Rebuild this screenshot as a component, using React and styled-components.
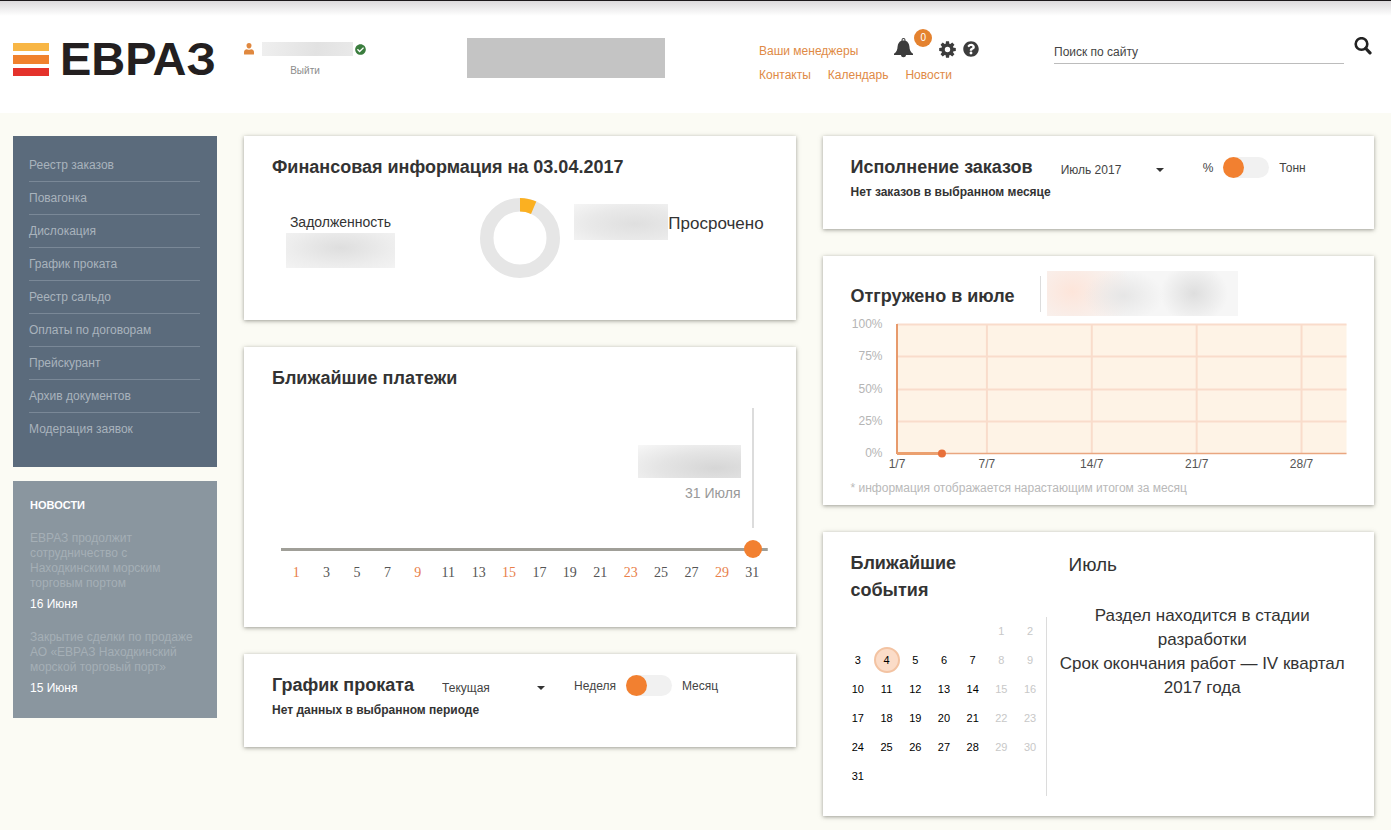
import React, { useState } from "react";
import styled, { createGlobalStyle } from "styled-components";
import { FaQuestionCircle, FaCheckCircle } from "react-icons/fa";

const sans = `"Liberation Sans", Arial, sans-serif`;
const serif = `"Liberation Serif", "Times New Roman", serif`;

const c = {
  ink: "#333333",
  orange: "#f28030",
  link: "#e08a45",
  page: "#fbfbf4",
  nav: "#5b6b7c",
  news: "#8a969f",
};

const GlobalStyle = createGlobalStyle`
  *, *::before, *::after { box-sizing: border-box; }
  body {
    margin: 0;
    min-height: 100vh;
    background: ${c.page};
    color: ${c.ink};
    font-family: ${sans};
    font-size: 12px;
  }
  input, select, button { font-family: inherit; }
  h1, h2, h3, p, ul { margin: 0; padding: 0; }
`;

const Header = styled.header`
  display: grid;
  grid-template-columns: 231px 223fr 292fr 295fr 320fr;
  align-items: start;
  min-height: 113px;
  padding: 36px 17px 0 13px;
  border-top: 1px solid #1c181b;
  background: linear-gradient(#dcdadc, #ffffff 15px);
`;

const Logo = styled.a`
  display: flex;
  align-items: center;
  gap: 11px;
  height: 44px;
  color: #231f20;
  font-size: 47px;
  font-weight: bold;
  line-height: 44px;
  text-decoration: none;
`;

const LogoBars = styled.svg`
  display: block;
  flex: none;
  width: 36px;
  height: 33px;
`;

const User = styled.div`
  display: flex;
  flex-direction: column;
  align-items: center;
  gap: 6px;
  width: 122px;
  padding-top: 5px;
`;

const UserName = styled.div`
  display: flex;
  align-items: center;
  gap: 2px;
  width: 100%;
  color: #e0883f;
`;

const Redacted = styled.span`
  display: block;
  flex: none;
  width: ${(p) => p.$w}px;
  height: ${(p) => p.$h}px;
  background: ${(p) => p.$fill};
`;

const NameRedacted = styled(Redacted)`
  margin-left: 6px;
`;

const Logout = styled.a`
  color: #8c8c8c;
  font-size: 10px;
  line-height: 18px;
  text-decoration: none;
`;

const Company = styled.div`
  width: 198px;
  height: 40px;
  margin-top: 1px;
  background: #c4c4c4;
`;

const Links = styled.nav`
  display: flex;
  flex-direction: column;
  padding-top: 2px;
`;

const LinkRow = styled.div`
  display: flex;
  align-items: center;
  gap: 17px;
  height: 24px;
`;

const HeaderLink = styled.a`
  color: ${c.link};
  font-size: 12px;
  line-height: 16px;
  text-decoration: none;
`;

const Tools = styled.div`
  display: flex;
  align-items: center;
  gap: 7px;
  margin: 0 0 4px 19px;
`;

const IconButton = styled.button`
  position: relative;
  display: flex;
  padding: 0;
  border: 0;
  background: none;
  color: #3c3c3c;
`;

const BellButton = styled(IconButton)`
  margin: 0 19px 2px 0;
`;

const Badge = styled.span`
  position: absolute;
  left: 20px;
  top: -9px;
  width: 18px;
  height: 18px;
  border-radius: 50%;
  background: #e4822f;
  color: #ffffff;
  font-size: 10px;
  line-height: 18px;
  text-align: center;
`;

const Search = styled.form`
  display: flex;
  align-items: flex-start;
  gap: 10px;
  padding-right: 2px;
`;

const SearchInput = styled.input`
  flex: 1;
  min-width: 0;
  height: 27px;
  padding: 4px 0 0;
  border: 0;
  border-bottom: 1px solid #bcbcbc;
  background: none;
  color: ${c.ink};
  font-size: 12px;
  outline: none;
  &::placeholder { color: #444444; opacity: 1; }
`;

const Main = styled.main`
  display: grid;
  grid-template-columns: 204px 1fr 1fr;
  gap: 27px;
  align-items: start;
  padding: 23px 17px 14px 13px;
`;

const Sidebar = styled.aside`
  display: flex;
  flex-direction: column;
  gap: 14px;
`;

const NavBox = styled.nav`
  padding: 13px 17px 21px 16px;
  background: ${c.nav};
`;

const NavList = styled.ul`
  list-style: none;
`;

const NavItem = styled.li`
  border-bottom: 1px solid #7a8897;
  &:last-child { border-bottom-color: transparent; }
`;

const NavLink = styled.a`
  display: block;
  color: #a9b3bc;
  font-size: 12px;
  line-height: 32px;
  text-decoration: none;
`;

const NewsBox = styled.section`
  display: flex;
  flex-direction: column;
  gap: 18px;
  padding: 16px 17px 22px;
  background: ${c.news};
`;

const NewsTitle = styled.h2`
  color: #ffffff;
  font-size: 11px;
  line-height: 16px;
  text-transform: uppercase;
`;

const NewsItem = styled.article`
  display: flex;
  flex-direction: column;
  gap: 6px;
`;

const NewsText = styled.a`
  color: #a5afb6;
  font-size: 12px;
  line-height: 15px;
  text-decoration: none;
`;

const NewsDate = styled.time`
  color: #ffffff;
  font-size: 12px;
  line-height: 15px;
`;

const Column = styled.div`
  display: flex;
  flex-direction: column;
  gap: 27px;
  min-width: 0;
`;

const Card = styled.section`
  padding: ${(p) => p.$top || 18}px 28px ${(p) => p.$bottom || 26}px;
  background: #ffffff;
  box-shadow: 0 1px 4px rgba(60, 60, 50, 0.5);
`;

const Title = styled.h2`
  color: ${c.ink};
  font-size: 18px;
  line-height: 27px;
`;

const Note = styled.p`
  font-size: 12px;
  font-weight: bold;
  line-height: 22px;
`;

const Finance = styled.div`
  display: grid;
  grid-template-columns: 194fr 94fr 193fr;
  padding: 17px 0 0 14px;
`;

const Debt = styled.div`
  display: flex;
  flex-direction: column;
  align-items: center;
  gap: 3px;
  width: 109px;
  padding-top: 16px;
  font-size: 14px;
  line-height: 16px;
`;

const Donut = styled.svg`
  display: block;
  width: 80px;
  height: 80px;
`;

const Overdue = styled.div`
  display: flex;
  align-items: flex-end;
  height: 36px;
  margin-top: 6px;
  font-size: 17px;
  line-height: 32px;
`;

const Timeline = styled.div`
  padding: 16px 0 0 9px;
`;

const Callout = styled.div`
  display: flex;
  flex-direction: column;
  align-items: flex-end;
  gap: 7px;
  height: 120px;
  margin-right: 14px;
  padding: 37px 11px 0 0;
  border-right: 2px solid #dcdcdc;
  color: #999999;
  font-size: 14px;
  line-height: 16px;
`;

const Track = styled.label`
  display: flex;
  margin-top: 12px;
  padding: 0 6px;
  background: linear-gradient(#a09f98, #a09f98) center / 100% 3px no-repeat;
`;

const Range = styled.input`
  appearance: none;
  width: 100%;
  height: 18px;
  margin: 0;
  background: none;
  &::-webkit-slider-thumb {
    appearance: none;
    width: 18px;
    height: 18px;
    border: 0;
    border-radius: 50%;
    background: ${c.orange};
  }
`;

const Days = styled.div`
  display: grid;
  grid-template-columns: repeat(16, 1fr);
  margin-top: 7px;
  font-family: ${serif};
  font-size: 14px;
  line-height: 16px;
  text-align: center;
`;

const Day = styled.span`
  color: ${(p) => (p.$off ? "#e8804a" : "#555555")};
`;

const HeadRow = styled.div`
  display: flex;
  align-items: center;
`;

const SelectBox = styled.div`
  display: flex;
  align-items: center;
  width: 103px;
  margin: 5px ${(p) => p.$gap}px 0 28px;
`;

const Select = styled.select`
  flex: 1;
  min-width: 0;
  height: 18px;
  margin-right: -8px;
  padding: 0;
  border: 0;
  appearance: none;
  background: none;
  color: #444444;
  font-size: 12px;
`;

const Caret = styled.svg`
  flex: none;
  width: 8px;
  height: 4px;
  pointer-events: none;
`;

const SwitchLabel = styled.label`
  display: flex;
  align-items: center;
  gap: 10px;
  color: #444444;
  font-size: 12px;
`;

const Switch = styled.input`
  appearance: none;
  width: 46px;
  height: 21px;
  margin: 0;
  border-radius: 11px;
  background: #f1f1f1;
  &::before {
    content: "";
    display: block;
    width: 21px;
    height: 21px;
    border-radius: 50%;
    background: ${c.orange};
  }
  &:checked::before { margin-left: auto; }
`;

const ShippedHead = styled.div`
  display: flex;
  align-items: center;
  height: 45px;
`;

const ShippedTitle = styled(Title)`
  padding-top: 5px;
`;

const ShippedValue = styled.div`
  display: flex;
  align-items: center;
  gap: 6px;
  margin-left: 26px;
  &::before {
    content: "";
    width: 1px;
    height: 36px;
    background: #dcdcdc;
  }
`;

const Chart = styled.div`
  display: flex;
  gap: 14px;
  color: #b5b5b5;
  font-size: 12px;
`;

const YAxis = styled.div`
  display: flex;
  flex-direction: column;
  justify-content: space-between;
  width: 32px;
  height: 145px;
  line-height: 16px;
  text-align: right;
`;

const Plot = styled.svg`
  flex: 1;
  min-width: 0;
  height: 150px;
  margin-top: 8px;
  overflow: visible;
  font-family: ${sans};
`;

const Footnote = styled.p`
  margin-top: 6px;
  color: #b9b9b9;
  font-size: 12px;
  line-height: 16px;
`;

const Events = styled.div`
  display: grid;
  grid-template-columns: 196px 1fr;
  gap: 12px;
`;

const EventsTitle = styled(Title)`
  padding-right: 28px;
`;

const CalendarBox = styled.div`
  margin: 13px 0 0 -7px;
  padding-bottom: 5px;
  border-right: 1px solid #dcdcdc;
`;

const Calendar = styled.table`
  width: 201px;
  table-layout: fixed;
  border-collapse: collapse;
  font-size: 11px;
`;

const Cell = styled.td`
  height: 29px;
  padding: 0 0 2px;
  color: ${(p) => (p.$off ? "#c8c8c8" : "#000000")};
  line-height: 16px;
  text-align: center;
`;

const Today = styled.span`
  display: block;
  width: 26px;
  height: 26px;
  margin: 0 auto;
  border: 2px solid #f3c3a2;
  border-radius: 50%;
  background: #fbdcc8;
  line-height: 22px;
`;

const Month = styled.h3`
  padding: 3px 0 0 10px;
  font-size: 19px;
  font-weight: normal;
  line-height: 24px;
`;

const EventText = styled.p`
  margin-top: 27px;
  font-size: 17px;
  line-height: 24px;
  text-align: center;
`;

const nav = ["Реестр заказов", "Повагонка", "Дислокация", "График проката", "Реестр сальдо", "Оплаты по договорам", "Прейскурант", "Архив документов", "Модерация заявок"];
const news = [
  ["ЕВРАЗ продолжит сотрудничество с Находкинским морским торговым портом", "16 Июня"],
  ["Закрытие сделки по продаже АО «ЕВРАЗ Находкинский морской торговый порт»", "15 Июня"],
];
const oddDays = Array.from({ length: 16 }, (_, i) => 2 * i + 1);
const offDays = [1, 9, 15, 23, 29];
const weeks = Array.from({ length: 6 }, (_, w) =>
  Array.from({ length: 7 }, (_, d) => {
    const n = w * 7 + d - 4;
    return n >= 1 && n <= 31 ? n : null;
  })
);
const dayX = (d) => `${((d - 1) / 30) * 100}%`;

function PeriodSelect({ label, options, gap }) {
  return (
    <SelectBox $gap={gap}>
      <Select aria-label={label}>
        {options.map((o) => <option key={o}>{o}</option>)}
      </Select>
      <Caret viewBox="0 0 8 4"><path d="M0 0h8L4 4z" fill="#333" /></Caret>
    </SelectBox>
  );
}

function Toggle({ left, right }) {
  const [on, setOn] = useState(false);
  return (
    <SwitchLabel>
      {left}
      <Switch type="checkbox" checked={on} onChange={() => setOn(!on)} />
      {right}
    </SwitchLabel>
  );
}

function ShipmentPlot() {
  return (
    <Plot>
      <rect width="100%" height="130" fill="#fef3e6" />
      {[0, 32, 65, 97].map((y) => (
        <line key={y} x1="0" x2="100%" y1={y + 0.5} y2={y + 0.5} stroke="#f9dccb" strokeWidth="2" />
      ))}
      {[7, 14, 21, 28].map((d) => (
        <line key={d} x1={dayX(d)} x2={dayX(d)} y1="0" y2="129" stroke="#f9dccb" strokeWidth="2" />
      ))}
      <line x1="0" x2="100%" y1="129.5" y2="129.5" stroke="#e9a680" strokeWidth="1.4" />
      <line x1="0" x2="0" y1="0" y2="130" stroke="#e79a6c" strokeWidth="2" />
      <line x1="0" x2={dayX(4)} y1="129.5" y2="129.5" stroke="#eba06f" strokeWidth="3" />
      <circle cx={dayX(4)} cy="129.5" r="4" fill="#e8703a" />
      {[1, 7, 14, 21, 28].map((d) => (
        <text key={d} x={dayX(d)} y="144" textAnchor="middle" fontSize="12" fill="#555">{d}/7</text>
      ))}
    </Plot>
  );
}

export default function App() {
  const [day, setDay] = useState(31);
  return (
    <>
      <GlobalStyle />
      <Header>
        <Logo href="#">
          <LogoBars viewBox="0 0 36 33">
            <rect width="36" height="8" fill="#f8b645" />
            <rect y="12" width="36" height="9" fill="#f0812d" />
            <rect y="25" width="36" height="8" fill="#e4322b" />
          </LogoBars>
          ЕВРАЗ
        </Logo>
        <User>
          <UserName>
            <svg width="10" height="12" viewBox="0 0 10 12" fill="currentColor">
              <path d="M5 0a2.500 2.500 0 0 1 2.500 2.500C7.500 4 6.800 5.600 5 5.600S2.500 4 2.500 2.500A2.500 2.500 0 0 1 5 0z" />
              <path d="M3 6.200Q5 7.400 7 6.200C9 6.400 10 7.500 10 9.200V11q0 .6-.6.6H.6Q0 11.600 0 11V9.200C0 7.500 1 6.400 3 6.200z" />
            </svg>
            <NameRedacted $w={91} $h={14} $fill="linear-gradient(100deg, #efefef, #e2e2e2 60%, #e9e9e9)" />
            <FaCheckCircle size={11} color="#3b7d3e" />
          </UserName>
          <Logout href="#">Выйти</Logout>
        </User>
        <Company />
        <Links>
          <LinkRow>
            <HeaderLink href="#">Ваши менеджеры</HeaderLink>
            <Tools>
              <BellButton aria-label="Уведомления">
                <svg width="19" height="20" viewBox="0 0 19 20" fill="currentColor">
                  <path fillRule="evenodd" d="M9.500 0a2 2 0 0 1 2 2v.8c2.400.8 3.600 3 3.900 5.600.3 3 .6 5.300 3.600 7.400V17H12c-.2 1.500-1 2.200-2.500 2.200S7.200 18.500 7 17H0v-1.200c3-2.100 3.300-4.400 3.600-7.400.3-2.600 1.500-4.800 3.900-5.600V2a2 2 0 0 1 2-2zm0 1a1 1 0 0 0-1 1v.4h2V2a1 1 0 0 0-1-1z" />
                </svg>
                <Badge>0</Badge>
              </BellButton>
              <IconButton aria-label="Настройки">
                <svg width="17" height="17" viewBox="-8.500 -8.500 17 17" fill="currentColor">
                  {[0, 45, 90, 135, 180, 225, 270, 315].map((a) => (
                    <path key={a} transform={`rotate(${a})`} d="M-2-5l.5-3.300h3L2-5z" />
                  ))}
                  <circle r="4.400" fill="none" stroke="currentColor" strokeWidth="3.400" />
                </svg>
              </IconButton>
              <IconButton aria-label="Помощь"><FaQuestionCircle size={16} /></IconButton>
            </Tools>
          </LinkRow>
          <LinkRow>
            <HeaderLink href="#">Контакты</HeaderLink>
            <HeaderLink href="#">Календарь</HeaderLink>
            <HeaderLink href="#">Новости</HeaderLink>
          </LinkRow>
        </Links>
        <Search>
          <SearchInput aria-label="Поиск по сайту" placeholder="Поиск по сайту" />
          <IconButton aria-label="Найти">
            <svg width="18" height="18" viewBox="0 0 18 18" fill="none" stroke="#222">
              <circle cx="7.500" cy="7" r="5.800" strokeWidth="2.600" />
              <path d="M11.800 11.500l4.200 4.400" strokeWidth="3.200" strokeLinecap="round" />
            </svg>
          </IconButton>
        </Search>
      </Header>

      <Main>
        <Sidebar>
          <NavBox>
            <NavList>
              {nav.map((t) => <NavItem key={t}><NavLink href="#">{t}</NavLink></NavItem>)}
            </NavList>
          </NavBox>
          <NewsBox>
            <NewsTitle>Новости</NewsTitle>
            {news.map(([text, date]) => (
              <NewsItem key={date}>
                <NewsText href="#">{text}</NewsText>
                <NewsDate>{date}</NewsDate>
              </NewsItem>
            ))}
          </NewsBox>
        </Sidebar>

        <Column>
          <Card $bottom={42}>
            <Title>Финансовая информация на 03.04.2017</Title>
            <Finance>
              <Debt>
                Задолженность
                <Redacted $w={109} $h={35} $fill="radial-gradient(ellipse at 50% 42%, #dedede, #ededed 65%, #f3f3f3)" />
              </Debt>
              <Donut viewBox="0 0 80 80">
                <circle cx="40" cy="40" r="33.250" fill="none" stroke="#e6e6e6" strokeWidth="13.500" />
                <path d="M40 0A40 40 0 0 1 56.300 3.500L51 15.900A26.500 26.500 0 0 0 40 13.500z" fill="#fbb021" />
              </Donut>
              <Overdue>
                <Redacted $w={94} $h={36} $fill="radial-gradient(ellipse at 65% 55%, #dfdfdf, #e9e9e9 55%, #f5f5f5)" />
                Просрочено
              </Overdue>
            </Finance>
          </Card>

          <Card $bottom={46}>
            <Title>Ближайшие платежи</Title>
            <Timeline>
              <Callout>
                <Redacted $w={103} $h={33} $fill="radial-gradient(ellipse at 75% 70%, #d6d6d6, #e4e4e4 50%, #f7f7f7)" />
                31 Июля
              </Callout>
              <Track>
                <Range type="range" aria-label="День платежа" min="1" max="31" step="2" value={day} onChange={(e) => setDay(+e.target.value)} />
              </Track>
              <Days>
                {oddDays.map((d) => <Day key={d} $off={offDays.includes(d)}>{d}</Day>)}
              </Days>
            </Timeline>
          </Card>

          <Card>
            <HeadRow>
              <Title>График проката</Title>
              <PeriodSelect label="Период" options={["Текущая", "Следующая"]} gap={29} />
              <Toggle left="Неделя" right="Месяц" />
            </HeadRow>
            <Note>Нет данных в выбранном периоде</Note>
          </Card>
        </Column>

        <Column>
          <Card>
            <HeadRow>
              <Title>Исполнение заказов</Title>
              <PeriodSelect label="Месяц" options={["Июль 2017", "Июнь 2017"]} gap={39} />
              <Toggle left="%" right="Тонн" />
            </HeadRow>
            <Note>Нет заказов в выбранном месяце</Note>
          </Card>

          <Card $top={15} $bottom={9}>
            <ShippedHead>
              <ShippedTitle>Отгружено в июле</ShippedTitle>
              <ShippedValue>
                <Redacted
                  $w={191}
                  $h={45}
                  $fill="radial-gradient(ellipse 34px 30px at 77% 50%, #dedede, transparent), radial-gradient(ellipse 40px 26px at 40% 55%, #e6e6e6, transparent), radial-gradient(ellipse 60px 50px at 13% 45%, #fde5da, transparent), #f6f6f6"
                />
              </ShippedValue>
            </ShippedHead>
            <Chart>
              <YAxis>
                {[100, 75, 50, 25, 0].map((v) => <span key={v}>{v}%</span>)}
              </YAxis>
              <ShipmentPlot />
            </Chart>
            <Footnote>* информация отображается нарастающим итогом за месяц</Footnote>
          </Card>

          <Card $bottom={20}>
            <Events>
              <div>
                <EventsTitle>Ближайшие события</EventsTitle>
                <CalendarBox>
                  <Calendar>
                    <tbody>
                      {weeks.map((w, i) => (
                        <tr key={i}>
                          {w.map((n, d) => (
                            <Cell key={d} $off={d > 4}>{n === 4 ? <Today>{n}</Today> : n}</Cell>
                          ))}
                        </tr>
                      ))}
                    </tbody>
                  </Calendar>
                </CalendarBox>
              </div>
              <div>
                <Month>Июль</Month>
                <EventText>
                  Раздел находится в стадии разработки
                  <br />
                  Срок окончания работ — IV квартал 2017 года
                </EventText>
              </div>
            </Events>
          </Card>
        </Column>
      </Main>
    </>
  );
}
